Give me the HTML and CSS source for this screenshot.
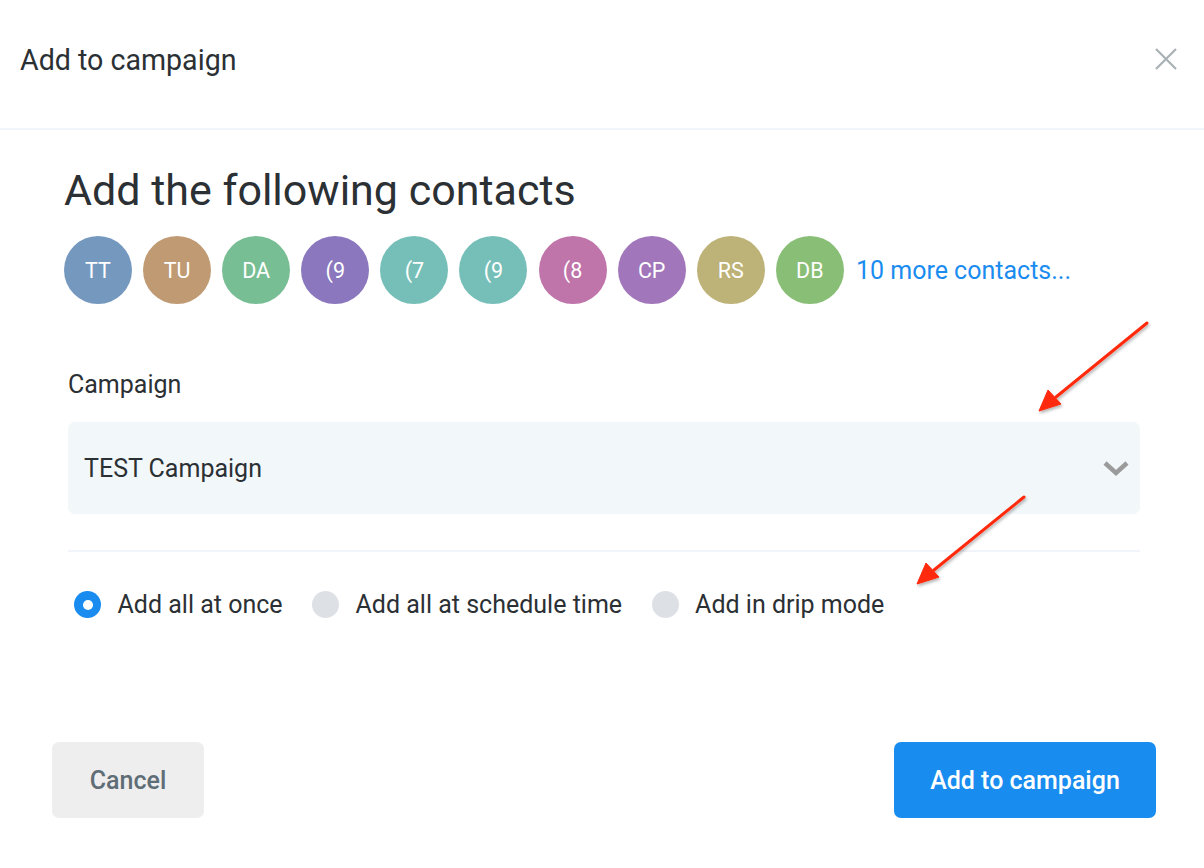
FILE: index.html
```html
<!DOCTYPE html>
<html>
<head>
<meta charset="utf-8">
<link rel="stylesheet" href="styles.css">
</head>
<body>
<div class="modal">
  <header class="modal-header">
    <h1 class="modal-title">Add to campaign</h1>
    <button class="close-btn" aria-label="Close">
      <svg width="24" height="24" viewBox="0 0 24 24"><path d="M2 2 L22 22 M22 2 L2 22" stroke="#a9b1b4" stroke-width="2.2" fill="none"/></svg>
    </button>
  </header>
  <main class="modal-body">
    <h2 class="heading">Add the following contacts</h2>
    <div class="avatars">
      <span class="avatar c1">TT</span>
      <span class="avatar c2">TU</span>
      <span class="avatar c3">DA</span>
      <span class="avatar c4">(9</span>
      <span class="avatar c5">(7</span>
      <span class="avatar c5">(9</span>
      <span class="avatar c6">(8</span>
      <span class="avatar c7">CP</span>
      <span class="avatar c8">RS</span>
      <span class="avatar c9">DB</span>
      <a class="more-link">10 more contacts...</a>
    </div>
    <div class="field">
      <label class="field-label">Campaign</label>
      <div class="select">
        <span class="select-value">TEST Campaign</span>
        <svg class="chevron" width="28" height="18" viewBox="0 0 28 18"><path d="M3 3 L14 13 L25 3" stroke="#9b9b9b" stroke-width="4.5" fill="none" stroke-linejoin="miter"/></svg>
      </div>
    </div>
    <div class="divider"></div>
    <div class="radios">
      <label class="radio"><span class="dot checked"></span>Add all at once</label>
      <label class="radio"><span class="dot"></span>Add all at schedule time</label>
      <label class="radio"><span class="dot"></span>Add in drip mode</label>
    </div>
  </main>
  <footer class="modal-footer">
    <button class="btn btn-cancel">Cancel</button>
    <button class="btn btn-primary">Add to campaign</button>
  </footer>
</div>
<svg class="arrows" width="1204" height="868" viewBox="0 0 1204 868">
  <defs>
    <filter id="sh" x="-20%" y="-20%" width="140%" height="140%">
      <feDropShadow dx="1" dy="2" stdDeviation="1.5" flood-color="#000" flood-opacity="0.3"/>
    </filter>
  </defs>
  <g filter="url(#sh)" fill="#ff2a0a" stroke="#ff2a0a">
    <line x1="1147" y1="323" x2="1056" y2="397" stroke-width="3" stroke-linecap="round"/>
    <polygon points="1039,411 1048,390 1061,404" stroke-width="1"/>
    <line x1="1024" y1="497" x2="934" y2="570" stroke-width="3" stroke-linecap="round"/>
    <polygon points="917,584 926,563 939,577" stroke-width="1"/>
  </g>
</svg>
</body>
</html>
```

FILE: styles.css
```css
* { box-sizing: border-box; }
html, body { margin: 0; padding: 0; background: #fff; }
body {
  font-family: Roboto, "Liberation Sans", Arial, sans-serif;
  color: #2b3034;
  width: 1204px;
  height: 868px;
  overflow: hidden;
  position: relative;
}
.modal { width: 1204px; }
.modal-header {
  height: 130px;
  border-bottom: 2px solid #f1f5f9;
  display: flex;
  align-items: center;
  justify-content: space-between;
  padding: 0 26px 0 20px;
}
.modal-title {
  margin: 0;
  font-size: 28.6px;
  font-weight: 400;
  color: #2b3034;
  padding-bottom: 8px;
}
.close-btn {
  background: none;
  border: 0;
  padding: 0;
  width: 24px;
  height: 24px;
  margin-bottom: 10px;
  cursor: pointer;
}
.modal-body { padding: 0 64px 0 64px; }
.heading {
  margin: 35px 0 0 0;
  font-size: 43px;
  font-weight: 400;
  line-height: 50px;
  color: #2b3034;
}
.avatars {
  margin-top: 21px;
  display: flex;
  align-items: center;
  gap: 11.1px;
}
.avatar {
  width: 68px;
  height: 68px;
  border-radius: 50%;
  color: #fff;
  display: flex;
  align-items: center;
  justify-content: center;
  font-size: 21.5px;
  flex: none;
}
.c1 { background: #7598be; }
.c2 { background: #bf9a73; }
.c3 { background: #78be94; }
.c4 { background: #8a77bd; }
.c5 { background: #76bfb8; }
.c6 { background: #bf74aa; }
.c7 { background: #a176bb; }
.c8 { background: #bdb277; }
.c9 { background: #89be76; }
.more-link {
  color: #1a8cf0;
  font-size: 25px;
  margin-left: 1px;
  cursor: pointer;
}
.field { margin: 66px 0 0 4px; }
.field-label {
  display: block;
  font-size: 25px;
  line-height: 30px;
  color: #2b3034;
}
.select {
  margin-top: 22px;
  height: 92px;
  width: 1072px;
  background: #f2f7fa;
  border-radius: 7px;
  display: flex;
  align-items: center;
  justify-content: space-between;
  padding: 0 10px 0 16px;
}
.select-value { font-size: 25px; color: #2b3034; }
.chevron { margin-top: 2px; }
.divider {
  margin: 36px 0 0 4px;
  width: 1072px;
  height: 2px;
  background: #f1f5f9;
}
.radios {
  margin: 38px 0 0 10px;
  display: flex;
  align-items: center;
  gap: 29.5px;
}
.radio {
  display: flex;
  align-items: center;
  font-size: 25px;
  line-height: 29px;
  color: #2b3034;
  gap: 16.5px;
}
.dot {
  width: 27px;
  height: 27px;
  border-radius: 50%;
  background: #dde1e6;
  flex: none;
}
.dot.checked {
  background: #1a8cf0;
  position: relative;
}
.dot.checked::after {
  content: "";
  position: absolute;
  left: 8.5px;
  top: 8.5px;
  width: 10px;
  height: 10px;
  border-radius: 50%;
  background: #fff;
}
.modal-footer {
  margin-top: 123px;
  display: flex;
  justify-content: space-between;
  padding: 0 48px 0 52px;
}
.btn {
  height: 76px;
  border: 0;
  border-radius: 7px;
  font-family: Roboto, "Liberation Sans", Arial, sans-serif;
  font-size: 25px;
  font-weight: 500;
  cursor: pointer;
}
.btn-cancel {
  width: 152px;
  background: #eeeeee;
  color: #5f6d76;
}
.btn-primary {
  width: 262px;
  background: #198cf0;
  color: #fff;
}
.arrows {
  position: absolute;
  left: 0;
  top: 0;
  pointer-events: none;
}
```
